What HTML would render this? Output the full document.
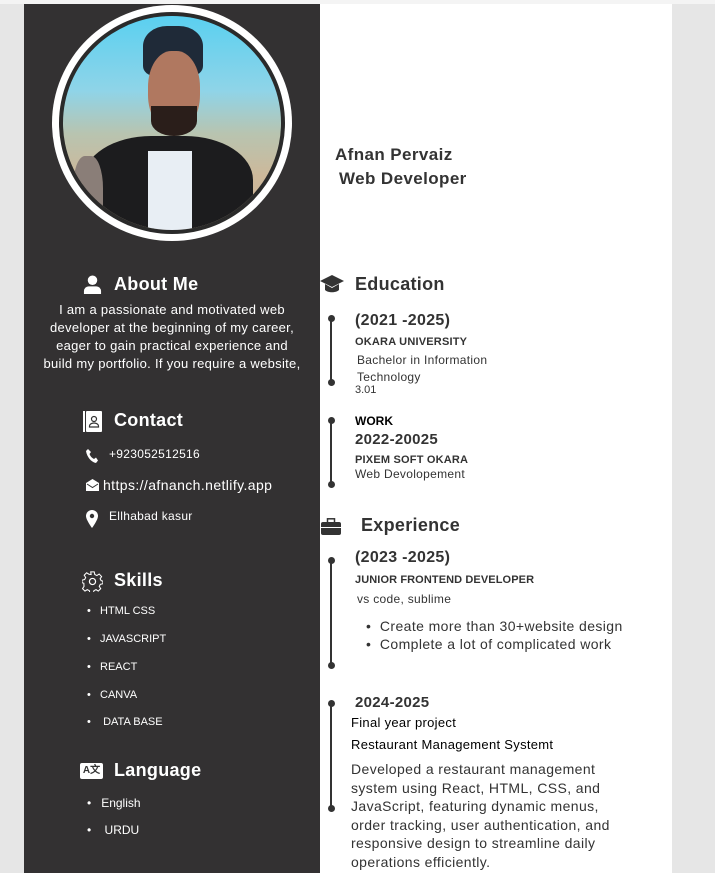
<!DOCTYPE html>
<html><head><meta charset="utf-8"><style>
*{margin:0;padding:0;box-sizing:border-box}
body{width:715px;height:873px;background:#e6e6e6;font-family:"Liberation Sans",sans-serif;position:relative;overflow:hidden}
.a{position:absolute;white-space:nowrap}
.w{color:#fff}.d{color:#333}
.h{font-weight:bold;font-size:18px;letter-spacing:0.3px}
.s{font-size:11px}
.vl{position:absolute;width:2px;background:#333;left:330px}
.dot{position:absolute;width:7px;height:7px;border-radius:50%;background:#333;left:327.5px}
</style></head><body>
<div class="a" style="left:0;top:0;width:715px;height:4px;background:#f4f4f4"></div>
<div class="a" style="left:24px;top:4px;width:648px;height:869px;background:#fff"></div>
<div class="a" style="left:24px;top:4px;width:296px;height:869px;background:#333132"></div>
<!-- photo -->
<div class="a" style="left:52px;top:5px;width:240px;height:236px;border-radius:50%;background:#fff"></div>
<div class="a" style="left:59px;top:12px;width:226px;height:222px;border-radius:50%;background:#2a2a2a"></div>
<div class="a" style="left:63px;top:16px;width:218px;height:214px;border-radius:50%;overflow:hidden;background:linear-gradient(#5ad0f0 0%,#8fd4e8 35%,#b8c4b0 55%,#cdb89a 75%,#c8b296 100%)">
<div class="a" style="left:80px;top:10px;width:60px;height:50px;border-radius:40% 40% 20% 20%;background:#1f2a38"></div>
<div class="a" style="left:85px;top:35px;width:52px;height:80px;border-radius:45%;background:#b07860"></div>
<div class="a" style="left:88px;top:90px;width:46px;height:30px;border-radius:0 0 50% 50%;background:#2a1e1a"></div>
<div class="a" style="left:20px;top:120px;width:170px;height:110px;border-radius:40% 40% 0 0;background:#1c1c1e"></div>
<div class="a" style="left:85px;top:135px;width:44px;height:90px;background:#e8eef4"></div>
<div class="a" style="left:10px;top:140px;width:30px;height:80px;background:#8a7e78;border-radius:40%"></div>
</div>
<div class="a d" style="left:335px;top:145px;font-weight:bold;font-size:17px;letter-spacing:0.4px">Afnan Pervaiz</div>
<div class="a d" style="left:339px;top:169px;font-weight:bold;font-size:17px;letter-spacing:0.4px">Web Developer</div>
<!-- About -->
<svg class="a" style="left:83px;top:275px" width="19" height="19" viewBox="0 0 20 20"><circle cx="10" cy="5.5" r="5" fill="#fff"/><path d="M1 20v-3a5 5 0 0 1 5-5h8a5 5 0 0 1 5 5v3z" fill="#fff"/></svg>
<div class="a w h" style="left:114px;top:274px">About Me</div>
<div class="a w" style="left:24px;top:301px;width:296px;text-align:center;font-size:13px;line-height:18px;letter-spacing:0.3px">I am a passionate and motivated web<br>developer at the beginning of my career,<br>eager to gain practical experience and<br>build my portfolio. If you require a website,</div>
<!-- Contact -->
<svg class="a" style="left:83px;top:411px" width="19" height="21" viewBox="0 0 19 21"><rect x="0" y="0" width="2" height="21" fill="#fff"/><rect x="3" y="0" width="16" height="21" rx="1" fill="#fff"/><circle cx="11" cy="8" r="2.5" fill="none" stroke="#333" stroke-width="1.2"/><path d="M6.5 16v-1a4.5 3 0 0 1 9 0v1z" fill="none" stroke="#333" stroke-width="1.2"/></svg>
<div class="a w h" style="left:114px;top:410px">Contact</div>
<svg class="a" style="left:86px;top:449px" width="12" height="14" viewBox="0 0 12 14"><path d="M2 0l3 3-1.5 2c1 2.5 2.5 4 4.5 5L10 8.5l2 3L10 14C5 13 1 8 0 2z" fill="#fff"/></svg>
<div class="a w" style="left:109px;top:447px;font-size:12px;letter-spacing:0.3px">+923052512516</div>
<svg class="a" style="left:86px;top:479px" width="13" height="12" viewBox="0 0 13 12"><path d="M0 4L6.5 0 13 4v8H0z" fill="#fff"/><path d="M1 5l5.5 3.5L12 5" fill="none" stroke="#333" stroke-width="1"/></svg>
<div class="a w" style="left:103px;top:477px;font-size:14px;letter-spacing:0.4px">https://afnanch.netlify.app</div>
<svg class="a" style="left:86px;top:510px" width="12" height="18" viewBox="0 0 12 18"><path d="M6 0a6 6 0 0 1 6 6c0 4-6 12-6 12S0 10 0 6a6 6 0 0 1 6-6z" fill="#fff"/><circle cx="6" cy="6" r="2.2" fill="#333"/></svg>
<div class="a w" style="left:109px;top:509px;font-size:12px;letter-spacing:0.3px">Ellhabad kasur</div>
<!-- Skills -->
<svg class="a" style="left:82px;top:571px" width="21" height="21" viewBox="0 0 24 24"><circle cx="12" cy="12" r="3.5" fill="none" stroke="#fff" stroke-width="1.4"/><path d="M10 1h4l.6 3 2.4 1.2 2.6-1.7 2.8 2.8-1.7 2.6L21.9 11l2 .6v3l-3 .6-1.2 2.4 1.7 2.6-2.8 2.8-2.6-1.7-2.4 1.2-.6 3h-4l-.6-3-2.4-1.2-2.6 1.7-2.8-2.8 1.7-2.6L2.1 14 0 13.4v-3l3-.6 1.2-2.4L2.5 4.8l2.8-2.8 2.6 1.7L10.4 4z" fill="none" stroke="#fff" stroke-width="1.2"/></svg>
<div class="a w h" style="left:114px;top:570px">Skills</div>
<div class="a w s" style="left:87px;top:605px">•&nbsp;&nbsp; HTML CSS</div>
<div class="a w s" style="left:87px;top:633px">•&nbsp;&nbsp; JAVASCRIPT</div>
<div class="a w s" style="left:87px;top:661px">•&nbsp;&nbsp; REACT</div>
<div class="a w s" style="left:87px;top:689px">•&nbsp;&nbsp; CANVA</div>
<div class="a w s" style="left:87px;top:716px">•&nbsp;&nbsp;&nbsp; DATA BASE</div>
<!-- Language -->
<div class="a" style="left:80px;top:763px;width:23px;height:16px;background:#fff;border-radius:2px;color:#333;font-size:10px;font-weight:bold;text-align:center;line-height:16px">A文</div>
<div class="a w h" style="left:114px;top:760px">Language</div>
<div class="a w" style="left:87px;top:796px;font-size:12px">•&nbsp;&nbsp; English</div>
<div class="a w" style="left:87px;top:823px;font-size:12px">•&nbsp;&nbsp;&nbsp; URDU</div>
<!-- Education -->
<svg class="a" style="left:320px;top:275px" width="24" height="20" viewBox="0 0 24 20"><path d="M12 0L24 6 12 12 0 6z" fill="#333"/><path d="M5 9v6c3 3 11 3 14 0V9l-7 4z" fill="#333"/></svg>
<div class="a d h" style="left:355px;top:274px">Education</div>
<div class="vl" style="top:318px;height:64px"></div><div class="dot" style="top:315px"></div><div class="dot" style="top:379px"></div>
<div class="a d" style="left:355px;top:312px;font-weight:bold;font-size:16px;letter-spacing:0.3px">(2021 -2025)</div>
<div class="a d" style="left:355px;top:336px;font-weight:bold;font-size:11px;letter-spacing:0.2px">OKARA UNIVERSITY</div>
<div class="a d" style="left:357px;top:353px;font-size:12px;letter-spacing:0.3px">Bachelor in Information</div>
<div class="a d" style="left:357px;top:370px;font-size:12px;letter-spacing:0.3px">Technology</div>
<div class="a d" style="left:355px;top:384px;font-size:11px">3.01</div>
<div class="vl" style="top:420px;height:64px"></div><div class="dot" style="top:417px"></div><div class="dot" style="top:481px"></div>
<div class="a" style="left:355px;top:414px;font-weight:bold;font-size:12px;color:#000">WORK</div>
<div class="a d" style="left:355px;top:431px;font-weight:bold;font-size:15px;letter-spacing:0.3px">2022-20025</div>
<div class="a d" style="left:355px;top:454px;font-weight:bold;font-size:11px;letter-spacing:0.2px">PIXEM SOFT OKARA</div>
<div class="a d" style="left:355px;top:467px;font-size:12px;letter-spacing:0.3px">Web Devolopement</div>
<!-- Experience -->
<svg class="a" style="left:321px;top:518px" width="20" height="17" viewBox="0 0 20 17"><rect x="6.5" y="0.8" width="7" height="4" fill="none" stroke="#333" stroke-width="1.5"/><rect x="0" y="4" width="20" height="13" rx="2" fill="#333"/><rect x="0" y="9" width="20" height="1" fill="#fff"/></svg>
<div class="a d h" style="left:361px;top:515px">Experience</div>
<div class="vl" style="top:560px;height:105px"></div><div class="dot" style="top:557px"></div><div class="dot" style="top:662px"></div>
<div class="a d" style="left:355px;top:549px;font-weight:bold;font-size:16px;letter-spacing:0.3px">(2023 -2025)</div>
<div class="a d" style="left:355px;top:574px;font-weight:bold;font-size:11px;letter-spacing:0.1px">JUNIOR FRONTEND DEVELOPER</div>
<div class="a d" style="left:357px;top:592px;font-size:12px;letter-spacing:0.3px">vs code, sublime</div>
<div class="a d" style="left:366px;top:618px;font-size:14px;letter-spacing:0.4px">•&nbsp; Create more than 30+website design</div>
<div class="a d" style="left:366px;top:636px;font-size:14px;letter-spacing:0.4px">•&nbsp; Complete a lot of complicated work</div>
<div class="vl" style="top:703px;height:105px"></div><div class="dot" style="top:700px"></div><div class="dot" style="top:805px"></div>
<div class="a d" style="left:355px;top:694px;font-weight:bold;font-size:15px;letter-spacing:0.3px">2024-2025</div>
<div class="a" style="left:351px;top:715px;font-size:13px;color:#000;letter-spacing:0.3px">Final year project</div>
<div class="a" style="left:351px;top:737px;font-size:13px;color:#000;letter-spacing:0.3px">Restaurant Management Systemt</div>
<div class="a d" style="left:351px;top:760px;font-size:14px;line-height:18.5px;letter-spacing:0.4px">Developed a restaurant management<br>system using React, HTML, CSS, and<br>JavaScript, featuring dynamic menus,<br>order tracking, user authentication, and<br>responsive design to streamline daily<br>operations efficiently.</div>
</body></html>
